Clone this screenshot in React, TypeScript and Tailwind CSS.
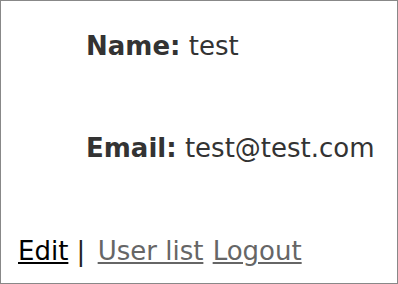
import React from 'react'

const App: React.FC = () => {
  return (
    <div className="box-border h-[284px] w-[398px] border border-[#888] bg-white pt-[30px] font-['DejaVu_Sans',Verdana,sans-serif] text-[26px] leading-[30px] text-[#333]">
      {/* 用户信息 */}
      <p className="ml-[85px]">
        <b>Name:</b> test
      </p>
      <p className="ml-[85px] mt-[72px]">
        <b>Email:</b> test@test.com
      </p>

      {/* 底部链接 */}
      <div className="mt-[73px] pl-[17px] text-[#222]">
        <a href="#" className="text-black underline">Edit</a> |{' '}
        <a href="#" className="ml-[4px] text-[#666] underline">User list</a>{' '}
        <a href="#" className="ml-[1px] text-[#666] underline">Logout</a>
      </div>
    </div>
  )
}

export default App
